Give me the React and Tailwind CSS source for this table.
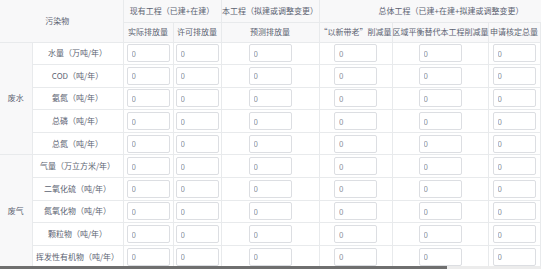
import React from 'react'

const font = { fontFamily: '"Noto Sans CJK SC", "Noto Sans", sans-serif' }

const rows = [
  { group: '废水', span: 5, name: '水量（万吨/年）' },
  { name: 'COD（吨/年）' },
  { name: '氨氮（吨/年）' },
  { name: '总磷（吨/年）' },
  { name: '总氮（吨/年）' },
  { group: '废气', span: 5, name: '气量（万立方米/年）' },
  { name: '二氧化硫（吨/年）' },
  { name: '氮氧化物（吨/年）' },
  { name: '颗粒物（吨/年）' },
  { name: '挥发性有机物（吨/年）' },
]

const th = 'border-b border-r border-[#e8eaec] p-0 font-normal whitespace-nowrap leading-none'

const Cell = () => (
  <td className="border-b border-r border-[#e8eaec] p-0 text-center">
    <input
      readOnly
      value="0"
      className="mx-auto block h-[18px] w-[43px] rounded-[2px] border border-[#dcdee2] bg-white px-[4px] text-[8px] text-[#8f939c] outline-none"
    />
  </td>
)

export default function App() {
  return (
    <div className="relative h-[269px] w-[541px] overflow-hidden bg-white text-[8px] text-[#5c6372]" style={font}>
      <table className="w-[655px] table-fixed border-collapse">
        <colgroup>
          <col className="w-[32px]" />
          <col className="w-[91px]" />
          <col className="w-[50px]" />
          <col className="w-[48px]" />
          <col className="w-[98px]" />
          <col className="w-[73px]" />
          <col className="w-[96px]" />
          <col className="w-[52px]" />
          <col className="w-[43px]" />
          <col className="w-[72px]" />
        </colgroup>
        <thead className="bg-[#f8f8f9]">
          <tr className="h-[22px]">
            <th rowSpan={2} colSpan={2} className={`${th} pr-[8px]`}>污染物</th>
            <th colSpan={2} className={th}>现有工程（已建+在建）</th>
            <th className={th}>本工程（拟建或调整变更）</th>
            <th colSpan={4} className={th}>总体工程（已建+在建+拟建或调整变更）</th>
            <th rowSpan={2} className="border-b border-[#e8eaec] p-0"></th>
          </tr>
          <tr className="h-[20px]">
            <th className={th}>实际排放量</th>
            <th className={th}>许可排放量</th>
            <th className={th}>预测排放量</th>
            <th className={th}>“以新带老”削减量</th>
            <th className={th}>区域平衡替代本工程削减量</th>
            <th className={th}>申请核定总量</th>
            <th className={th}></th>
          </tr>
        </thead>
        <tbody>
          {rows.map((r) => (
            <tr key={r.name} className="h-[22.6px]">
              {r.group && (
                <td rowSpan={r.span} className="border-b border-r border-[#e8eaec] bg-[#f8f8f9] p-0 text-center leading-none">
                  {r.group}
                </td>
              )}
              <td className="border-b border-r border-[#e8eaec] p-0 text-center whitespace-nowrap leading-none">{r.name}</td>
              <Cell />
              <Cell />
              <Cell />
              <Cell />
              <Cell />
              <Cell />
              <Cell />
              <td className="border-b border-[#e8eaec] p-0"></td>
            </tr>
          ))}
        </tbody>
      </table>
      <div className="absolute bottom-0 left-0 h-[3px] w-[541px] bg-[#ececec]">
        <div className="h-full w-[447px] bg-[#6f6f6f]"></div>
      </div>
    </div>
  )
}
